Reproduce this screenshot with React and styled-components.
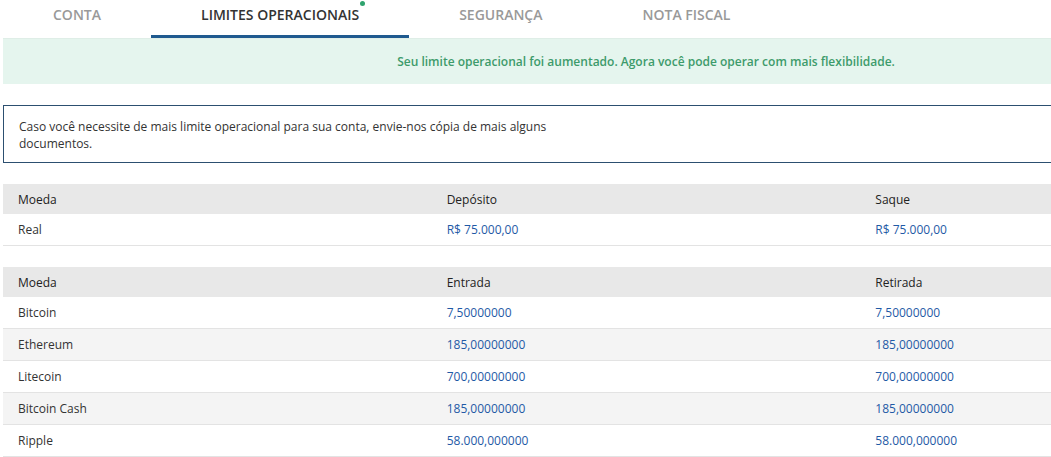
import React from "react";
import styled, { createGlobalStyle } from "styled-components";

const Global = createGlobalStyle`
  html, body { margin: 0; padding: 0; background: #fff; overflow: hidden; }
  body { font-family: "Open Sans", "Noto Sans", sans-serif; color: #333; }
`;

const Page = styled.div`
  width: 1286px;
  padding-left: 3px;
`;

const Tabs = styled.nav`
  display: flex;
  height: 38px;
`;

const Tab = styled.div`
  position: relative;
  padding: 0 50px;
  height: 38px;
  box-sizing: border-box;
  display: flex;
  align-items: center;
  padding-bottom: 7px;
  font-size: 14px;
  font-weight: 600;
  text-transform: uppercase;
  color: ${(p) => (p.$active ? "#333" : "#999")};
  border-bottom: 3px solid ${(p) => (p.$active ? "#1f5a8f" : "transparent")};
`;

const Dot = styled.span`
  position: absolute;
  right: 44px;
  top: 1px;
  width: 5px;
  height: 5px;
  border-radius: 50%;
  background: #2fa36e;
`;

const Content = styled.div`
  display: flex;
  flex-direction: column;
  gap: 21px;
`;

const Banner = styled.div`
  height: 46px;
  background: #e5f5ee;
  border-top: 1px solid #dfeee7;
  box-sizing: border-box;
  display: flex;
  align-items: center;
  justify-content: center;
  font-size: 12px;
  font-weight: 600;
  color: #3d9b6b;
`;

const Info = styled.div`
  border: 1px solid #2c4f70;
  border-right: none;
  padding: 12px 15px 10px;
  font-size: 12px;
  line-height: 17px;
  color: #333;
`;

const InfoText = styled.p`
  margin: 0;
  max-width: 545px;
`;

const Tables = styled.div`
  display: flex;
  flex-direction: column;
  gap: 21px;
`;

const Table = styled.table`
  width: 100%;
  border-collapse: collapse;
  table-layout: fixed;
  font-size: 12px;
`;

const Th = styled.th`
  height: 30px;
  padding: 0 15px;
  text-align: left;
  font-weight: 400;
  color: #222;
  background: #e8e8e8;
`;

const Tr = styled.tr`
  background: ${(p) => (p.$alt ? "#f4f4f4" : "#fff")};
  border-bottom: 1px solid #e3e3e3;
`;

const Td = styled.td`
  height: 31px;
  padding: 0 15px;
  color: ${(p) => (p.$value ? "#1f5aa6" : "#333")};
`;

const LimitTable = ({ headers, rows }) => (
  <Table>
    <thead>
      <tr>
        {headers.map((h) => (
          <Th key={h}>{h}</Th>
        ))}
      </tr>
    </thead>
    <tbody>
      {rows.map((r, i) => (
        <Tr key={r[0]} $alt={i % 2 === 1}>
          <Td>{r[0]}</Td>
          <Td $value>{r[1]}</Td>
          <Td $value>{r[2]}</Td>
        </Tr>
      ))}
    </tbody>
  </Table>
);

export default function App() {
  return (
    <Page>
      <Global />
      <Tabs>
        <Tab>Conta</Tab>
        <Tab $active>
          Limites Operacionais
          <Dot />
        </Tab>
        <Tab>Segurança</Tab>
        <Tab>Nota Fiscal</Tab>
      </Tabs>
      <Content>
        <Banner>
          Seu limite operacional foi aumentado. Agora você pode operar com mais flexibilidade.
        </Banner>
        <Info>
          <InfoText>
            Caso você necessite de mais limite operacional para sua conta, envie-nos cópia de mais alguns documentos.
          </InfoText>
        </Info>
        <Tables>
          <LimitTable
            headers={["Moeda", "Depósito", "Saque"]}
            rows={[["Real", "R$ 75.000,00", "R$ 75.000,00"]]}
          />
          <LimitTable
            headers={["Moeda", "Entrada", "Retirada"]}
            rows={[
              ["Bitcoin", "7,50000000", "7,50000000"],
              ["Ethereum", "185,00000000", "185,00000000"],
              ["Litecoin", "700,00000000", "700,00000000"],
              ["Bitcoin Cash", "185,00000000", "185,00000000"],
              ["Ripple", "58.000,000000", "58.000,000000"],
            ]}
          />
        </Tables>
      </Content>
    </Page>
  );
}
